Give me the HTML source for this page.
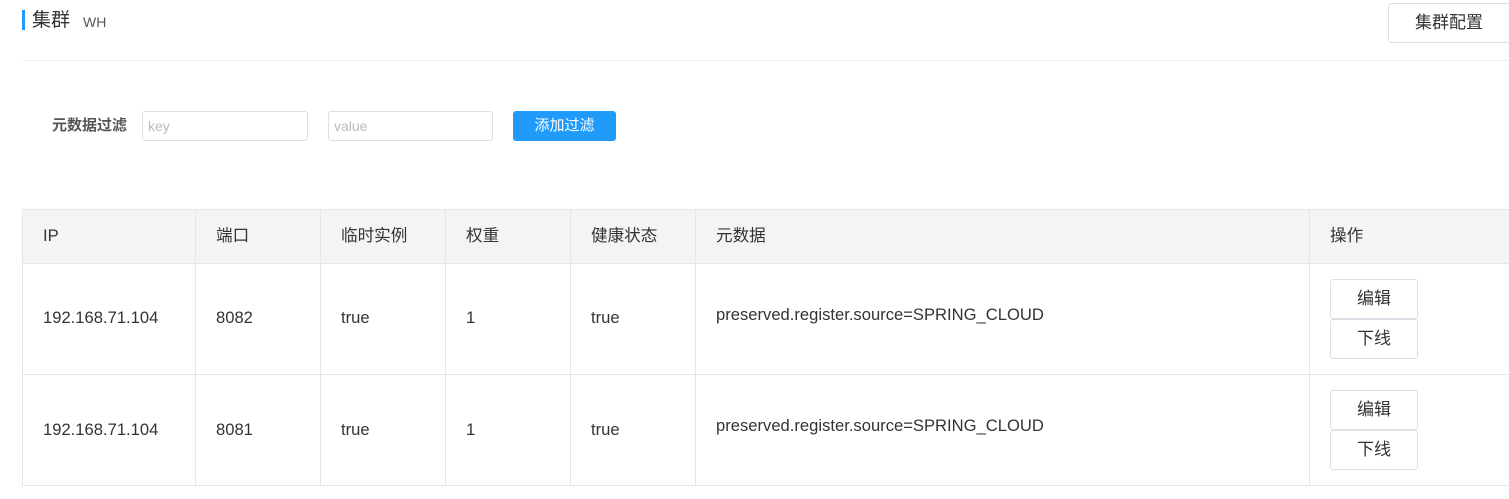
<!DOCTYPE html>
<html><head><meta charset="utf-8"><style>
*{box-sizing:border-box;margin:0;padding:0}
body{width:1509px;height:499px;background:#fff;font-family:"Liberation Sans","Noto Sans CJK SC",sans-serif;color:#333;position:relative;overflow:hidden}
.a{position:absolute}
.btn{position:absolute;border:1px solid #dcdfe6;border-radius:3px;background:#fff;text-align:center;font-size:17px;color:#333}
.cell{position:absolute;font-size:16.6px;color:#333;line-height:20px;height:20px}
.vl{position:absolute;width:1px;background:#e6e6e6}
.hl{position:absolute;height:1px;background:#e6e6e6;left:22px;width:1487px}
</style></head><body>
<div class="a" style="left:22px;top:10px;width:3px;height:20px;background:#209bfa"></div>
<div class="a" style="left:32px;top:9px;font-size:19px;line-height:24px;color:#333">集群</div>
<div class="a" style="left:83px;top:14px;font-size:14px;color:#555">WH</div>
<div class="btn" style="left:1388px;top:3px;width:130px;height:40px;line-height:38px;padding-right:8px">集群配置</div>
<div class="a" style="left:22px;top:60px;width:1487px;height:1px;background:#eee"></div>

<div class="a" style="left:52px;top:117px;font-size:15px;line-height:18px;font-weight:bold;color:#555">元数据过滤</div>
<div class="a" style="left:142px;top:111px;width:166px;height:30px;border:1px solid #dcdfe6;border-radius:3px;font-size:14px;color:#bbb;line-height:28px;padding-left:5px">key</div>
<div class="a" style="left:328px;top:111px;width:165px;height:30px;border:1px solid #dcdfe6;border-radius:3px;font-size:14px;color:#bbb;line-height:28px;padding-left:5px">value</div>
<div class="a" style="left:513px;top:111px;width:103px;height:30px;background:#209bfa;border-radius:3px;font-size:15px;color:#fff;line-height:30px;text-align:center">添加过滤</div>

<div class="a" style="left:22px;top:209px;width:1487px;height:54px;background:#f4f4f4"></div>
<div class="hl" style="top:209px"></div>
<div class="hl" style="top:263px"></div>
<div class="hl" style="top:374px"></div>
<div class="hl" style="top:485px"></div>
<div class="vl" style="left:22px;top:209px;height:277px"></div>
<div class="vl" style="left:195px;top:209px;height:277px"></div>
<div class="vl" style="left:320px;top:209px;height:277px"></div>
<div class="vl" style="left:445px;top:209px;height:277px"></div>
<div class="vl" style="left:570px;top:209px;height:277px"></div>
<div class="vl" style="left:695px;top:209px;height:277px"></div>
<div class="vl" style="left:1309px;top:209px;height:277px"></div>

<div class="cell" style="left:43px;top:226px">IP</div>
<div class="cell" style="left:216px;top:226px">端口</div>
<div class="cell" style="left:341px;top:226px">临时实例</div>
<div class="cell" style="left:466px;top:226px">权重</div>
<div class="cell" style="left:591px;top:226px">健康状态</div>
<div class="cell" style="left:716px;top:226px">元数据</div>
<div class="cell" style="left:1330px;top:226px">操作</div>

<div class="cell" style="left:43px;top:308px">192.168.71.104</div>
<div class="cell" style="left:216px;top:308px">8082</div>
<div class="cell" style="left:341px;top:308px">true</div>
<div class="cell" style="left:466px;top:308px">1</div>
<div class="cell" style="left:591px;top:308px">true</div>
<div class="cell" style="left:716px;top:305px">preserved.register.source=SPRING_CLOUD</div>
<div class="btn" style="left:1330px;top:279px;width:88px;height:40px;line-height:38px">编辑</div>
<div class="btn" style="left:1330px;top:319px;width:88px;height:40px;line-height:38px">下线</div>

<div class="cell" style="left:43px;top:420px">192.168.71.104</div>
<div class="cell" style="left:216px;top:420px">8081</div>
<div class="cell" style="left:341px;top:420px">true</div>
<div class="cell" style="left:466px;top:420px">1</div>
<div class="cell" style="left:591px;top:420px">true</div>
<div class="cell" style="left:716px;top:416px">preserved.register.source=SPRING_CLOUD</div>
<div class="btn" style="left:1330px;top:390px;width:88px;height:40px;line-height:38px">编辑</div>
<div class="btn" style="left:1330px;top:430px;width:88px;height:40px;line-height:38px">下线</div>
</body></html>
